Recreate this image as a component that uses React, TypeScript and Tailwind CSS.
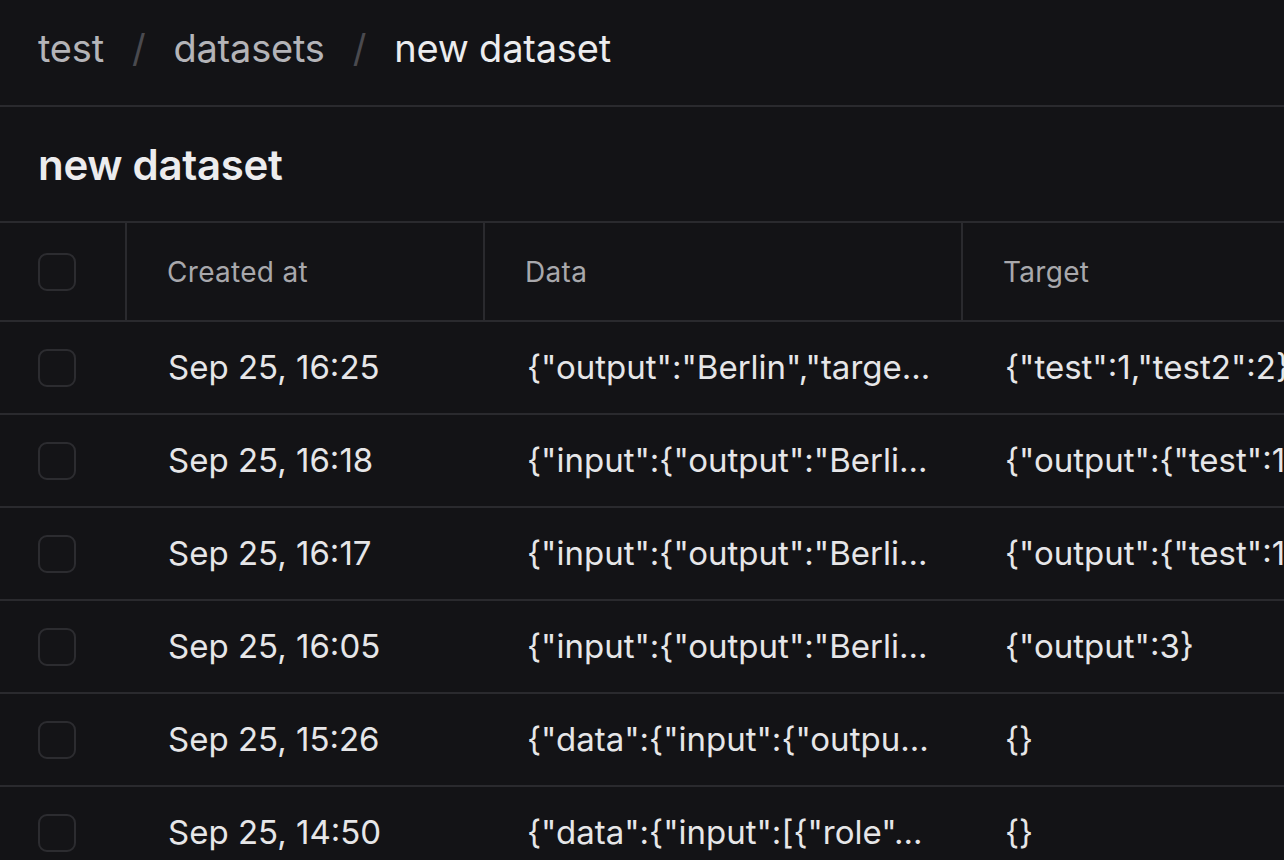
const rows = [
  { created: "Sep 25, 16:25", data: '{"output":"Berlin","targe...', target: '{"test":1,"test2":2}' },
  { created: "Sep 25, 16:18", data: '{"input":{"output":"Berli...', target: '{"output":{"test":1,"test2":2}}' },
  { created: "Sep 25, 16:17", data: '{"input":{"output":"Berli...', target: '{"output":{"test":1,"test2":2}}' },
  { created: "Sep 25, 16:05", data: '{"input":{"output":"Berli...', target: '{"output":3}' },
  { created: "Sep 25, 15:26", data: '{"data":{"input":{"outpu...', target: "{}" },
  { created: "Sep 25, 14:50", data: '{"data":{"input":[{"role"...', target: "{}" },
];

function Checkbox() {
  return <div className="w-[38px] h-[38px] rounded-[9px] border-2 border-[#2c2c30] bg-[#141417]" />;
}

export default function App() {
  return (
    <div
      className="w-[1284px] h-[860px] overflow-hidden bg-[#131316] text-[#e6e6e8]"
      style={{ fontFamily: "Inter, 'Noto Sans', sans-serif" }}
    >
      {/* breadcrumb */}
      <div className="h-[107px] flex items-center px-[38px] pb-[8px] border-b-2 border-[#2a2a2e] text-[38px] tracking-[-0.2px]">
        <span className="text-[#b4b4b8]">test</span>
        <span className="text-[#4a4a4f] mx-[28px]">/</span>
        <span className="text-[#b4b4b8]">datasets</span>
        <span className="text-[#4a4a4f] mx-[28px]">/</span>
        <span className="text-[#ececee]">new dataset</span>
      </div>

      {/* title */}
      <div className="h-[116px] flex items-center px-[38px] border-b-2 border-[#2a2a2e]">
        <h1 className="text-[42px] font-semibold text-[#ececee] tracking-[-0.3px]">new dataset</h1>
      </div>

      {/* table */}
      <div className="w-[1500px]">
        <div className="flex h-[99px] border-b-2 border-[#2a2a2e] text-[28px] tracking-[0.3px] text-[#a8a8ac]">
          <div className="w-[127px] flex items-center pl-[38px] border-r-2 border-[#2a2a2e] shrink-0">
            <Checkbox />
          </div>
          <div className="w-[358px] flex items-center pl-[40px] border-r-2 border-[#2a2a2e] shrink-0">Created at</div>
          <div className="w-[478px] flex items-center pl-[40px] border-r-2 border-[#2a2a2e] shrink-0">Data</div>
          <div className="flex-1 flex items-center pl-[40px]">Target</div>
        </div>
        {rows.map((r, i) => (
          <div key={i} className="flex h-[93px] border-b-2 border-[#2a2a2e] text-[33px] text-[#e6e6e8] whitespace-nowrap">
            <div className="w-[127px] flex items-center pl-[38px] shrink-0">
              <Checkbox />
            </div>
            <div className="w-[358px] flex items-center pl-[41px] shrink-0">{r.created}</div>
            <div className="w-[478px] flex items-center pl-[42px] shrink-0">{r.data}</div>
            <div className="flex-1 flex items-center pl-[42px]">{r.target}</div>
          </div>
        ))}
      </div>
    </div>
  );
}
